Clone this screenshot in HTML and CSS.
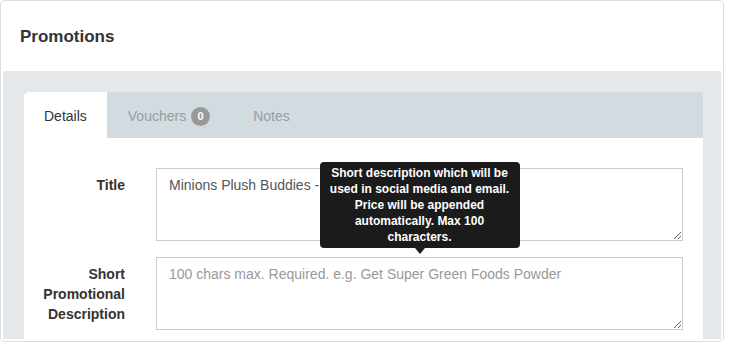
FILE: index.html
```html
<!DOCTYPE html>
<html lang="en">
<head>
    <meta charset="UTF-8">
    <meta name="viewport" content="width=device-width, initial-scale=1.0">
    <title>Promotions</title>
    <link rel="stylesheet" href="styles.css">
</head>
<body>
<div class="panel">
    <div class="panel-heading">
        <h3>Promotions</h3>
    </div>
    <div class="panel-body">
        <ul class="tabs">
            <li class="active"><a href="#">Details</a></li>
            <li><a href="#">Vouchers <span class="badge">0</span></a></li>
            <li><a href="#">Notes</a></li>
        </ul>
        <div class="tab-content">
            <form class="promo-form">
                <div class="form-row">
                    <label for="title">Title</label>
                    <textarea id="title" rows="3">Minions Plush Buddies - Bob</textarea>
                </div>
                <div class="form-row">
                    <label for="short-desc">Short Promotional Description</label>
                    <div class="field">
                        <div class="tooltip">Short description which will be used in social media and email. Price will be appended automatically. Max 100 characters.</div>
                        <textarea id="short-desc" rows="3" placeholder="100 chars max. Required. e.g. Get Super Green Foods Powder"></textarea>
                    </div>
                </div>
            </form>
        </div>
    </div>
</div>
</body>
</html>
```

FILE: styles.css
```css
body {
    font-family: "Liberation Sans", Arial, sans-serif;
    font-size: 14px;
    line-height: 20px;
    color: #333;
    margin: 0;
    padding: 0;
    background: #fff;
}

.panel {
    width: 722px;
    height: 340px;
    border: 1px solid #dcdcdc;
    border-radius: 5px;
    display: flex;
    flex-direction: column;
    overflow: hidden;
}

.panel-heading {
    height: 68px;
    padding: 2px 19px 0 19px;
    display: flex;
    align-items: center;
}

.panel-heading h3 {
    margin: 0;
    font-size: 17px;
    font-weight: bold;
    color: #333;
}

.panel-body {
    flex: 1;
    margin: 0 2px 2px 2px;
    background-color: #e4e8eb;
    padding: 21px 18px 0 21px;
    display: flex;
    flex-direction: column;
    min-height: 0;
}

.tabs {
    list-style-type: none;
    display: flex;
    margin: 0;
    padding: 0;
    background-color: #d1dbe0;
}

.tabs li a {
    display: flex;
    align-items: center;
    gap: 5px;
    height: 20px;
    padding: 14px 20px 12px 20px;
    color: #959ea3;
    text-decoration: none;
}

.tabs li:nth-child(2) a {
    padding-left: 21px;
}

.tabs li.active a {
    background-color: #fff;
    color: #333;
    border-radius: 4px 0 0 0;
}

.badge {
    display: inline-block;
    width: 19px;
    height: 19px;
    line-height: 19px;
    border-radius: 50%;
    background-color: #999;
    color: white;
    font-size: 11px;
    font-weight: bold;
    text-align: center;
}

.tabs li:nth-child(3) a {
    padding-left: 23px;
}

.tab-content {
    flex: 1;
    background-color: #fff;
    padding: 30px 20px 0 0;
}

.form-row {
    display: grid;
    grid-template-columns: 101px 1fr;
    column-gap: 31px;
    margin-bottom: 16px;
}

.form-row label {
    text-align: right;
    font-weight: bold;
    padding-top: 7px;
}

.field {
    position: relative;
}

textarea {
    display: block;
    width: 100%;
    box-sizing: border-box;
    height: 73px;
    padding: 6px 12px;
    border: 1px solid #ccc;
    border-radius: 0;
    font-family: "Liberation Sans", Arial, sans-serif;
    font-size: 14px;
    line-height: 20px;
    color: #555;
    margin: 0;
}

textarea::placeholder {
    color: #999;
}

.tooltip {
    position: absolute;
    bottom: calc(100% + 9px);
    left: 50%;
    transform: translateX(-50%);
    width: 184px;
    padding: 3px 8px;
    background-color: #1b1b1b;
    color: #fff;
    border-radius: 4px;
    font-size: 12px;
    font-weight: bold;
    line-height: 16px;
    text-align: center;
    z-index: 2;
}

.tooltip::after {
    content: "";
    position: absolute;
    top: 100%;
    left: 50%;
    margin-left: -5px;
    border-width: 6px 5px 0 5px;
    border-style: solid;
    border-color: #1b1b1b transparent transparent transparent;
}
```
